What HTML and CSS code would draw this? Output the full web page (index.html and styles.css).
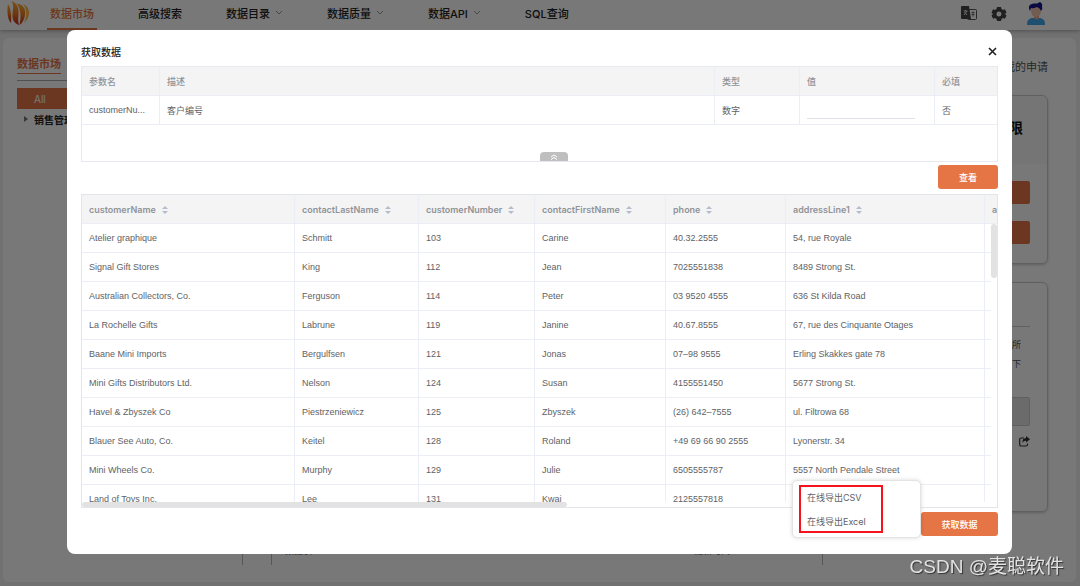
FILE: index.html
```html
<!DOCTYPE html>
<html lang="zh-CN">
<head>
<meta charset="utf-8">
<meta name="viewport" content="width=device-width, initial-scale=1">
<title>数据市场</title>
<link rel="stylesheet" href="styles.css">
</head>
<body>
<div class="app">
  <header class="topbar">
    <svg class="logo" viewBox="0 0 22 24" aria-hidden="true">
      <defs><linearGradient id="flame" x1="0" y1="0" x2="0" y2="1"><stop offset="0" stop-color="#ffb02e"/><stop offset=".5" stop-color="#ee7a22"/><stop offset="1" stop-color="#c02c14"/></linearGradient></defs>
      <path fill="url(#flame)" d="M1 3C4 7 4.500 15 4 22C0 18 0 9 1 3Z"/>
      <path fill="url(#flame)" d="M4.500 0C10 2 12 7 11.500 13C11 18 11 21 12 24C7 22 5 18 5.500 13C6 8 7 4 4.500 0Z"/>
      <path fill="url(#flame)" d="M9.500 2.500C16 3 19 8 18 14C17.500 18 15.500 22 12.500 24C14 18 14.500 8 9.500 2.500Z"/>
      <path fill="#ffb93c" d="M16 3C21 5 23 10 21.500 15C21 18 19 20 17 22C20 15 20 8 16 3Z"/>
    </svg>
    <nav class="nav">
      <a class="nav-item nav-active" href="#">数据市场</a>
      <a class="nav-item" href="#">高级搜索</a>
      <a class="nav-item" href="#">数据目录<svg class="chev" viewBox="0 0 8 5"><path d="M1 1l3 3 3-3"/></svg></a>
      <a class="nav-item" href="#">数据质量<svg class="chev" viewBox="0 0 8 5"><path d="M1 1l3 3 3-3"/></svg></a>
      <a class="nav-item" href="#">数据API<svg class="chev" viewBox="0 0 8 5"><path d="M1 1l3 3 3-3"/></svg></a>
      <a class="nav-item" href="#">SQL查询</a>
    </nav>
    <div class="tools">
      <svg width="16" height="15" viewBox="0 0 16 15" aria-hidden="true"><rect x="6.500" y="3.500" width="9" height="10" rx="1" fill="none" stroke="#555"/><path fill="#444" d="M1 0h7l2 13H1a1 1 0 0 1-1-1V1a1 1 0 0 1 1-1z"/><path d="M2.500 5h4M4.500 4v1M3 9l3-4M3.500 6l2.500 3" stroke="#eee" fill="none" stroke-width=".9"/><path d="M10.500 6.500h3M10.500 8.500h3M12 5.500v5" stroke="#555" fill="none" stroke-width=".8"/></svg>
      <svg width="14" height="14" viewBox="0 0 14 14" aria-hidden="true"><path fill="#444" fill-rule="evenodd" d="M5 0h4l.5 2 1.500.9 1.900-.6 1.600 3.200L13 7l1.500 1.500-1.600 3.200-1.900-.6-1.500.9-.5 2H5l-.5-2-1.500-.9-1.900.6L-.5 8.500 1 7-.5 5.500l1.600-3.200 1.900.6L4.500 2zM7 4.500a2.500 2.500 0 1 0 0 5 2.500 2.500 0 0 0 0-5z"/></svg>
      <svg width="18" height="23" viewBox="0 0 18 23" aria-hidden="true"><path fill="#42a9ee" d="M0 23c0-5 2-7 6-7h6c4 0 6 2 6 7z"/><path fill="#e8a890" d="M7 12h5v4q-2 3-5 0z"/><ellipse cx="9" cy="9" rx="5" ry="6" fill="#f5c3ae"/><path fill="#17178c" d="M3 9C0 3 4 1 10 1.500L13 0q3 2 2 4 1 3-1 5-1-3-4-4-4 2-6 1z"/></svg>
    </div>
  </header>
  <main class="page">
    <aside class="side">
      <h2 class="side-title"><span>数据市场</span></h2>
      <button class="side-all" type="button">All</button>
      <div class="side-node"><svg width="4" height="6" viewBox="0 0 4 6"><path d="M0 0l4 3-4 3z" fill="#777"/></svg>销售管理</div>
    </aside>
    <div class="list"><div class="rail"></div><div class="list-box"><span>数据表</span><span>更新时间</span></div></div>
    <aside class="right">
      <a class="apply" href="#">我的申请</a>
      <section class="card">
        <h3 class="card-head">数据权限</h3>
        <div class="card-body"><div class="block-btn"></div><div class="block-btn"></div></div>
      </section>
      <section class="card card-info">
        <p class="note">如有疑问请联系所<br>在部门并提交如下</p>
        <div class="field"></div>
        <svg class="share" viewBox="0 0 11 11" aria-hidden="true"><path d="M5 2H2Q.7 2 .7 3.300v5.400Q.7 10 2 10h5q1.500 0 1.500-1.500V7.500" fill="none" stroke="#333" stroke-width="1.200"/><path d="M7 0l4 3.300-4 3.200V4.700Q4.500 4.500 3.500 7 3 2.200 7 2z" fill="#333"/></svg>
      </section>
    </aside>
  </main>
</div>

<div class="mask">
  <section class="modal" role="dialog" aria-labelledby="dlg-title">
    <header class="modal-head">
      <h1 id="dlg-title">获取数据</h1>
      <button class="close" type="button" aria-label="关闭"><svg width="9" height="9" viewBox="0 0 9 9"><path d="M1 1l7 7M8 1l-7 7" stroke="#222" stroke-width="1.600"/></svg></button>
    </header>
    <div class="params">
      <table class="grid">
        <colgroup><col class="p-name"><col><col class="p-type"><col class="p-value"><col class="p-req"></colgroup>
        <thead><tr><th>参数名</th><th>描述</th><th>类型</th><th>值</th><th>必填</th></tr></thead>
        <tbody><tr><td>customerNu...</td><td>客户编号</td><td>数字</td><td><input class="value" type="text" aria-label="值"></td><td>否</td></tr></tbody>
      </table>
      <button class="fold" type="button" aria-label="收起"><svg width="8" height="6" viewBox="0 0 8 6"><path d="M1 3l3-2 3 2M1 5.500l3-2 3 2" fill="none" stroke="#fff"/></svg></button>
    </div>
    <div class="actions"><button class="btn" type="button">查看</button></div>
    <div class="result">
      <div class="result-head">
        <table class="grid data">
          <colgroup><col class="c1"><col class="c2"><col class="c3"><col class="c4"><col class="c5"><col class="c6"><col class="c7"></colgroup>
          <thead><tr><th>customerName<i class="sort"></i></th><th>contactLastName<i class="sort"></i></th><th>customerNumber<i class="sort"></i></th><th>contactFirstName<i class="sort"></i></th><th>phone<i class="sort"></i></th><th>addressLine1<i class="sort"></i></th><th>addressLine2</th></tr></thead>
        </table>
      </div>
      <div class="result-body">
        <table class="grid data">
          <colgroup><col class="c1"><col class="c2"><col class="c3"><col class="c4"><col class="c5"><col class="c6"><col class="c7"></colgroup>
          <tbody>
            <tr><td>Atelier graphique</td><td>Schmitt</td><td>103</td><td>Carine</td><td>40.32.2555</td><td>54, rue Royale</td><td></td></tr>
            <tr><td>Signal Gift Stores</td><td>King</td><td>112</td><td>Jean</td><td>7025551838</td><td>8489 Strong St.</td><td></td></tr>
            <tr><td>Australian Collectors, Co.</td><td>Ferguson</td><td>114</td><td>Peter</td><td>03 9520 4555</td><td>636 St Kilda Road</td><td></td></tr>
            <tr><td>La Rochelle Gifts</td><td>Labrune</td><td>119</td><td>Janine</td><td>40.67.8555</td><td>67, rue des Cinquante Otages</td><td></td></tr>
            <tr><td>Baane Mini Imports</td><td>Bergulfsen</td><td>121</td><td>Jonas</td><td>07–98 9555</td><td>Erling Skakkes gate 78</td><td></td></tr>
            <tr><td>Mini Gifts Distributors Ltd.</td><td>Nelson</td><td>124</td><td>Susan</td><td>4155551450</td><td>5677 Strong St.</td><td></td></tr>
            <tr><td>Havel &amp; Zbyszek Co</td><td>Piestrzeniewicz</td><td>125</td><td>Zbyszek</td><td>(26) 642–7555</td><td>ul. Filtrowa 68</td><td></td></tr>
            <tr><td>Blauer See Auto, Co.</td><td>Keitel</td><td>128</td><td>Roland</td><td>+49 69 66 90 2555</td><td>Lyonerstr. 34</td><td></td></tr>
            <tr><td>Mini Wheels Co.</td><td>Murphy</td><td>129</td><td>Julie</td><td>6505555787</td><td>5557 North Pendale Street</td><td></td></tr>
            <tr><td>Land of Toys Inc.</td><td>Lee</td><td>131</td><td>Kwai</td><td>2125557818</td><td></td><td></td></tr>
          </tbody>
        </table>
      </div>
      <div class="thumb-y"></div>
      <div class="thumb-x"></div>
    </div>
    <footer class="modal-foot">
      <div class="export">
        <button class="btn btn-wide" type="button">获取数据</button>
        <div class="menu">
          <div class="menu-mark">
            <button class="menu-item" type="button">在线导出CSV</button>
            <button class="menu-item" type="button">在线导出Excel</button>
          </div>
        </div>
      </div>
    </footer>
  </section>
</div>
<div class="watermark">CSDN @麦聪软件</div>
</body>
</html>
```

FILE: styles.css
```css
* { box-sizing: border-box; }
body {
  margin: 0;
  font-family: Inter, "Noto Sans CJK SC", sans-serif;
  font-size: 9px;
  color: #606266;
  background: #f0f0f0;
}
button, input { font: inherit; color: inherit; border: 0; padding: 0; background: none; }
h1, h2, h3, p { margin: 0; }
a { color: inherit; text-decoration: none; }
svg { display: block; }

.app { height: 100vh; display: flex; flex-direction: column; overflow: hidden; }
.topbar {
  flex: none;
  height: 30px;
  display: flex;
  align-items: center;
  padding: 0 35px 0 7px;
  background: #fff;
  box-shadow: 0 1px 4px rgba(0, 0, 0, .3);
  z-index: 1;
}
.logo { width: 22px; height: 24px; margin: 0 18px 4px 0; }
.nav { display: flex; flex: 1; gap: 38px; color: #222; font-size: 11px; font-weight: 500; height: 30px; }
.nav-item { display: flex; align-items: center; gap: 5px; padding: 0 3px 3px; border-bottom: 2px solid transparent; }
.nav-active { color: #e57545; border-color: #e57545; }
.chev { width: 8px; height: 5px; fill: none; stroke: #999; }
.tools { display: flex; align-items: center; gap: 21px; height: 26px; margin-bottom: 3px; }
.tools svg { overflow: visible; }
.tools svg:first-child { margin-right: -6px; }

.page { flex: 1; display: flex; margin: 8px 4px 4px 3px; background: #fff; border-radius: 6px; }
.side { width: 239px; padding: 17px 14px; }
.side-title { color: #e57545; font-size: 11px; line-height: 18px; padding-bottom: 6px; border-bottom: 1px solid #aaa; }
.side-title span { display: inline-block; border-bottom: 1px solid #e57545; }
.side-all { display: block; width: 100%; height: 21px; margin-top: 7px; padding-left: 17px; text-align: left; color: #fff; font-size: 10px; background: #e57545; }
.side-node { display: flex; align-items: center; gap: 6px; height: 20px; padding-left: 7px; color: #222; font-size: 10px; font-weight: 700; }
.list { flex: 1; display: flex; margin-bottom: 17px; border-left: 1px solid #bbb; }
.rail { width: 28px; }
.list-box {
  width: 552px;
  display: flex;
  align-items: flex-end;
  justify-content: space-between;
  padding: 0 92px 8px 13px;
  line-height: 12px;
  border: solid #bbb;
  border-width: 0 1px;
}
.right { width: 200px; padding: 20px 28px 0 0; display: flex; flex-direction: column; }
.apply { text-align: right; color: #555; font-size: 11px; line-height: 18px; margin-bottom: 19px; }
.card { border: 1px solid #ccc; border-radius: 6px; margin-bottom: 18px; box-shadow: 0 1px 3px rgba(0, 0, 0, .2); }
.card-head { background: #f8f8f8; border-radius: 6px 6px 0 0; height: 68px; padding-right: 24px; text-align: right; line-height: 64px; font-size: 14px; color: #111; }
.card-body { padding: 17px 17px 19px; display: grid; gap: 17px; }
.block-btn { height: 23px; border-radius: 2px; background: #e57545; }
.card-info { padding: 43px 17px 64px; }
.note { border-top: 1px solid #ccc; padding: 8px 9px 24px; text-align: right; line-height: 19px; color: #555; }
.field { height: 29px; border: 1px solid #ccc; border-radius: 2px; background: #e4e4e4; }
.share { width: 11px; height: 11px; margin: 10px 0 0 auto; }

.mask {
  position: fixed;
  inset: 0;
  z-index: 2;
  padding: 30px 68px 32px 67px;
  background: rgba(0, 0, 0, .53);
}
.modal { height: 100%; display: flex; flex-direction: column; padding: 12px 14px 18px; border-radius: 8px; background: #fff; }
.modal-head { display: flex; justify-content: space-between; align-items: center; height: 18px; margin-bottom: 6px; padding-right: 1px; }
.modal-head h1 { font-size: 10px; color: #222; font-weight: 500; }

.grid { width: 100%; border-collapse: separate; border-spacing: 0; table-layout: fixed; }
.grid th, .grid td {
  height: 29px;
  padding: 0 7px;
  border-right: 1px solid #ebeef5;
  border-bottom: 1px solid #ebeef5;
  text-align: left;
  white-space: nowrap;
}
.grid th { background: #f4f4f4; color: #909399; font-weight: 600; }
.grid td { font-family: "Liberation Sans", "Noto Sans CJK SC", sans-serif; }
.params { position: relative; height: 96px; border: 1px solid #e6e9ee; flex: none; }
.params .grid th { font-weight: 500; }
.params .grid th:last-child, .params .grid td:last-child { border-right: 0; }
.p-name { width: 78px; }
.p-type { width: 85px; }
.p-value { width: 135px; }
.p-req { width: 62px; }
.value { display: block; width: 108px; height: 18px; border-bottom: 1px solid #dfe2e8; }
.fold {
  position: absolute;
  left: 50%;
  bottom: 0;
  width: 28px;
  height: 9px;
  display: grid;
  place-items: center;
  background: #bfbfbf;
  border-radius: 4px 4px 0 0;
}
.actions { display: flex; justify-content: flex-end; padding: 3px 0 5px; }
.btn { width: 60px; height: 24px; border-radius: 3px; background: #e57545; color: #fff; font-weight: 500; }
.btn-wide { width: 77px; }

.result { position: relative; flex: 1; min-height: 0; display: flex; flex-direction: column; border: 1px solid #e2e5ea; padding-bottom: 5px; }
.result-head { flex: none; overflow: hidden; background: #f4f4f4; }
.result-body { flex: 1; min-height: 0; overflow: hidden; margin-right: 6px; }
.data { width: 1107px; }
.c1 { width: 213px; }
.c2 { width: 124px; }
.c3 { width: 116px; }
.c4 { width: 131px; }
.c5 { width: 120px; }
.c6 { width: 199px; }
.c7 { width: 204px; }
.sort { display: inline-grid; gap: 2px; margin-left: 6px; vertical-align: middle; }
.sort::before, .sort::after { content: ""; border: solid transparent; border-width: 0 3px; }
.sort::before { border-bottom: 3px solid #b4bccc; }
.sort::after { border-top: 3px solid #b4bccc; }
.thumb-y { position: absolute; right: 0; top: 29px; width: 6px; height: 54px; border-radius: 3px; background: #e2e2e2; }
.thumb-x { position: absolute; left: 0; bottom: 0; width: 53%; height: 5px; border-radius: 3px; background: #e2e2e2; }

.modal-foot { display: flex; justify-content: flex-end; padding-top: 4px; }
.export { position: relative; }
.menu {
  position: absolute;
  right: 77px;
  bottom: -2px;
  width: 129px;
  padding: 4px 6px;
  background: #fff;
  border: 1px solid #e4e4e4;
  border-radius: 5px;
  box-shadow: 0 0 4px rgba(0, 0, 0, .15);
}
.menu-mark { width: 84px; outline: 2px solid #f5141c; outline-offset: -2px; display: grid; }
.menu-item { height: 24px; padding-left: 8px; text-align: left; white-space: nowrap; }
.watermark {
  position: fixed;
  right: 16px;
  bottom: 5px;
  z-index: 3;
  font-family: "Liberation Sans", "Noto Sans CJK SC", sans-serif;
  font-size: 19px;
  line-height: 28px;
  color: #e2e2e2;
  text-shadow: 1px 1px 1px #333;
}
```
